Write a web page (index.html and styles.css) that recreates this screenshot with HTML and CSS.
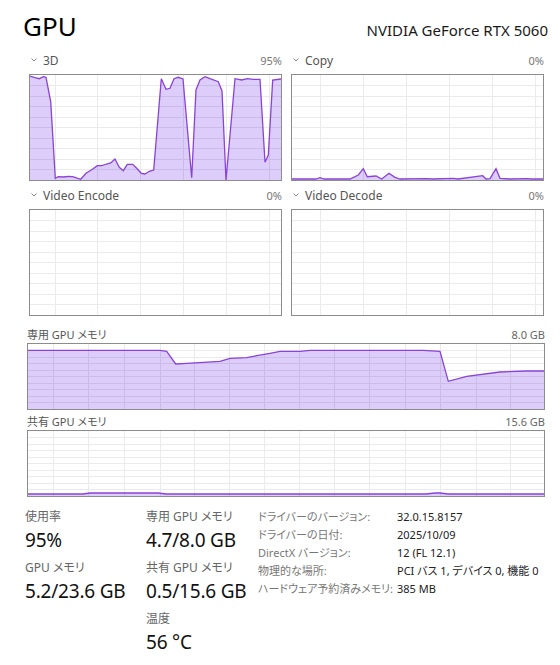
FILE: index.html
```html
<!DOCTYPE html>
<html>
<head>
    <meta name="viewport" content="width=device-width, initial-scale=1.0">
    <title>GPU</title>
    <link rel="stylesheet" href="styles.css">
</head>
<body>
    <svg class="defs" width="0" height="0">
        <defs>
            <path id="grid-a" d="M25.5 0V105M67.5 0V105M110.5 0V105M153.5 0V105M196.5 0V105M239.5 0V105M0 10.5H251M0 21.5H251M0 31.5H251M0 42.5H251M0 52.5H251M0 63.5H251M0 73.5H251M0 84.5H251M0 94.5H251"/>
            <path id="grid-b" d="M28.5 0V105M71.5 0V105M114.5 0V105M157.5 0V105M200.5 0V105M243.5 0V105M0 10.5H251M0 21.5H251M0 31.5H251M0 42.5H251M0 52.5H251M0 63.5H251M0 73.5H251M0 84.5H251M0 94.5H251"/>
            <path id="grid-m" d="M25.5 0V65M60.5 0V65M96.5 0V65M132.5 0V65M166.5 0V65M201.5 0V65M236.5 0V65M271.5 0V65M306.5 0V65M341.5 0V65M377.5 0V65M412.5 0V65M448.5 0V65M482.5 0V65M0 6.5H516M0 13.5H516M0 19.5H516M0 26.5H516M0 32.5H516M0 39.5H516M0 45.5H516M0 52.5H516M0 58.5H516"/>
            <path id="chev" d="M0.5 0.5L3 3L5.5 0.5"/>
        </defs>
    </svg>

    <header class="head">
        <h1>GPU</h1>
        <div class="model">NVIDIA GeForce RTX 5060</div>
    </header>

    <section class="engines">
        <div class="engine">
            <div class="engine-label">
                <span class="name"><svg class="chev" width="6" height="4"><use href="#chev"/></svg>3D</span>
                <span class="pct">95%</span>
            </div>
            <div class="graph">
                <svg viewBox="0 0 251 105" preserveAspectRatio="none">
                    <polygon class="area" points="0,1 5,2.7 9.3,3.7 13.3,1.7 16,2.3 20.7,26.7 25.3,103.3 28.3,101.7 33.3,102 38.3,101.3 42.7,101.7 50.7,104.3 56,98.3 61.7,94.7 67.3,90.7 71.7,90.7 76.7,89 80.7,88 85,84 89.3,92.3 93.3,95.7 97.3,89.3 102.7,89.3 106.7,93.3 111.3,98.3 115,99 119.3,96.3 123.7,95 131.3,3.7 136,14.3 140,13.3 144,3.7 148.3,2.3 153,4 161.7,102.7 166,15 170,5 175,1.7 180,3.7 188.3,6.7 192,16 196,105 205,3.7 211.7,5 217.3,3.7 223.3,4.3 230,4.3 235,87.3 238.3,80 242.7,5 251,4 251,105 0,105"/>
                    <use class="grid" href="#grid-a"/>
                    <polyline class="line" points="0,1 5,2.7 9.3,3.7 13.3,1.7 16,2.3 20.7,26.7 25.3,103.3 28.3,101.7 33.3,102 38.3,101.3 42.7,101.7 50.7,104.3 56,98.3 61.7,94.7 67.3,90.7 71.7,90.7 76.7,89 80.7,88 85,84 89.3,92.3 93.3,95.7 97.3,89.3 102.7,89.3 106.7,93.3 111.3,98.3 115,99 119.3,96.3 123.7,95 131.3,3.7 136,14.3 140,13.3 144,3.7 148.3,2.3 153,4 161.7,102.7 166,15 170,5 175,1.7 180,3.7 188.3,6.7 192,16 196,105 205,3.7 211.7,5 217.3,3.7 223.3,4.3 230,4.3 235,87.3 238.3,80 242.7,5 251,4"/>
                </svg>
            </div>
        </div>
        <div class="engine">
            <div class="engine-label">
                <span class="name"><svg class="chev" width="6" height="4"><use href="#chev"/></svg>Copy</span>
                <span class="pct">0%</span>
            </div>
            <div class="graph">
                <svg viewBox="0 0 251 105" preserveAspectRatio="none">
                    <polygon class="area" points="0,104 24,104 28,102.7 32,104 58,104 66.3,100 71.3,93.7 75.3,101.7 84,101 89.7,104 97,98.3 103,102.3 108,104 134.7,103.7 141,104 161.3,103.3 166,104 190.7,100.7 194,104 198,103.7 204,93.7 208,103.3 218,104 234.7,103.6 239,104 251,104 251,105 0,105"/>
                    <use class="grid" href="#grid-b"/>
                    <polyline class="line" points="0,104 24,104 28,102.7 32,104 58,104 66.3,100 71.3,93.7 75.3,101.7 84,101 89.7,104 97,98.3 103,102.3 108,104 134.7,103.7 141,104 161.3,103.3 166,104 190.7,100.7 194,104 198,103.7 204,93.7 208,103.3 218,104 234.7,103.6 239,104 251,104"/>
                </svg>
            </div>
        </div>
        <div class="engine">
            <div class="engine-label">
                <span class="name"><svg class="chev" width="6" height="4"><use href="#chev"/></svg>Video Encode</span>
                <span class="pct">0%</span>
            </div>
            <div class="graph">
                <svg viewBox="0 0 251 105" preserveAspectRatio="none">
                    <use class="grid" href="#grid-a"/>
                </svg>
            </div>
        </div>
        <div class="engine">
            <div class="engine-label">
                <span class="name"><svg class="chev" width="6" height="4"><use href="#chev"/></svg>Video Decode</span>
                <span class="pct">0%</span>
            </div>
            <div class="graph">
                <svg viewBox="0 0 251 105" preserveAspectRatio="none">
                    <use class="grid" href="#grid-b"/>
                </svg>
            </div>
        </div>
    </section>

    <section class="memory">
        <div class="mem-label first">
            <span>専用 GPU メモリ</span>
            <span class="cap">8.0 GB</span>
        </div>
        <div class="mem-graph">
            <svg viewBox="0 0 516 65" preserveAspectRatio="none">
                <polygon class="area" points="0,6.3 132,6.3 138.7,7.3 147.7,20 158.7,19.3 175.3,18.3 192,17.3 202,14.3 218.7,13.7 228.7,11.7 242,9.3 252,7.3 272,7.3 282,6.3 395.3,6.3 412,7.3 420.3,37.3 438.7,32.3 472,28 498.7,27 516,27 516,65 0,65"/>
                <use class="grid" href="#grid-m"/>
                <polyline class="line" points="0,6.3 132,6.3 138.7,7.3 147.7,20 158.7,19.3 175.3,18.3 192,17.3 202,14.3 218.7,13.7 228.7,11.7 242,9.3 252,7.3 272,7.3 282,6.3 395.3,6.3 412,7.3 420.3,37.3 438.7,32.3 472,28 498.7,27 516,27"/>
            </svg>
        </div>
        <div class="mem-label">
            <span>共有 GPU メモリ</span>
            <span class="cap">15.6 GB</span>
        </div>
        <div class="mem-graph">
            <svg viewBox="0 0 516 65" preserveAspectRatio="none">
                <polygon class="area" points="0,63 55,63 62,62 130,62 138,63 398,63 407,62 412,62 420,63 516,63 516,65 0,65"/>
                <use class="grid" href="#grid-m"/>
                <polyline class="line" points="0,63 55,63 62,62 130,62 138,63 398,63 407,62 412,62 420,63 516,63"/>
            </svg>
        </div>
    </section>

    <section class="stats">
        <div class="stat-col">
            <div class="stat-label">使用率</div>
            <div class="stat-value">95%</div>
            <div class="stat-label">GPU メモリ</div>
            <div class="stat-value">5.2/23.6 GB</div>
        </div>
        <div class="stat-col">
            <div class="stat-label">専用 GPU メモリ</div>
            <div class="stat-value">4.7/8.0 GB</div>
            <div class="stat-label">共有 GPU メモリ</div>
            <div class="stat-value">0.5/15.6 GB</div>
            <div class="stat-label">温度</div>
            <div class="stat-value">56 °C</div>
        </div>
        <dl class="props">
            <dt>ドライバーのバージョン:</dt><dd>32.0.15.8157</dd>
            <dt>ドライバーの日付:</dt><dd>2025/10/09</dd>
            <dt>DirectX バージョン:</dt><dd>12 (FL 12.1)</dd>
            <dt>物理的な場所:</dt><dd>PCI バス 1, デバイス 0, 機能 0</dd>
            <dt>ハードウェア予約済みメモリ:</dt><dd>385 MB</dd>
        </dl>
    </section>
</body>
</html>
```

FILE: styles.css
```css
body {
    margin: 0;
    background: #fff;
    color: #1a1a1a;
    font-family: "Noto Sans", "Noto Sans CJK JP", sans-serif;
    font-feature-settings: "palt";
}
.defs {
    display: block;
    overflow: hidden;
}
.head {
    display: flex;
    justify-content: space-between;
    align-items: baseline;
    height: 46px;
    box-sizing: border-box;
    padding: 8px 12px 0 23px;
}
h1 {
    margin: 0;
    font-size: 26px;
    font-weight: 400;
    line-height: 36px;
    color: #000;
}
.model {
    font-size: 15px;
}
.engines {
    display: grid;
    grid-template-columns: 253px 253px;
    column-gap: 9px;
    padding-left: 29px;
}
.engine-label {
    display: flex;
    justify-content: space-between;
    align-items: center;
    height: 28px;
    font-size: 12px;
    color: #555;
}
.name {
    display: flex;
    align-items: center;
}
.chev {
    margin: 0 6px 0 2px;
    fill: none;
    stroke: #888;
    stroke-width: 1;
}
.pct {
    font-size: 11px;
    color: #777;
}
.graph, .mem-graph {
    height: 105px;
    border: 1px solid #8c8c8c;
}
.mem-graph {
    height: 65px;
}
.graph svg, .mem-graph svg {
    display: block;
    width: 100%;
    height: 100%;
}
.area {
    fill: #ddcdfb;
}
.grid {
    fill: none;
    stroke: rgba(0, 0, 0, 0.08);
    stroke-width: 1;
    shape-rendering: crispEdges;
}
.line {
    fill: none;
    stroke: #8a43d6;
    stroke-width: 1.3;
}
.memory {
    width: 518px;
    padding-left: 27px;
}
.mem-label {
    display: flex;
    justify-content: space-between;
    padding-top: 3px;
    font-size: 11px;
    line-height: 17px;
    color: #555;
}
.mem-label.first {
    margin-top: 7px;
}
.cap {
    color: #666;
}
.stats {
    display: grid;
    grid-template-columns: 121px 112px 1fr;
    margin-top: 11px;
    padding-left: 25px;
}
.stat-label {
    font-size: 12px;
    line-height: 18px;
    color: #666;
}
.stat-value {
    font-size: 19px;
    line-height: 29px;
    margin-bottom: 4px;
    letter-spacing: -0.2px;
    color: #111;
}
.props {
    display: grid;
    grid-template-columns: 139px auto;
    align-content: start;
    margin: 0;
    font-size: 11px;
    line-height: 18px;
}
.props dt {
    color: #777;
}
.props dd {
    margin: 0;
    color: #222;
}
```
